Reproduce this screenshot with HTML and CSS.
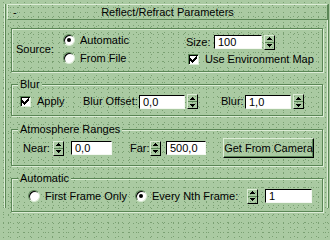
FILE: index.html
```html
<!DOCTYPE html>
<html>
<head>
<meta charset="utf-8">
<link rel="stylesheet" href="styles.css">
</head>
<body>
<div class="rollout">
  <div class="titlebar">
    <span class="minus">-</span>
    <span class="title">Reflect/Refract Parameters</span>
    <span></span>
  </div>

  <div class="group g-source">
    <div class="src-label">Source:</div>
    <div class="radio-col">
      <div class="opt"><span class="radio on"></span>Automatic</div>
      <div class="opt"><span class="radio"></span>From File</div>
    </div>
    <div class="src-right">
      <div class="row">
        <span class="lbl-size">Size:</span>
        <span class="num w48">100</span>
        <span class="spin sp-after"><i class="up"><svg width="5" height="3" viewBox="0 0 5 3"><path d="M2 0h1v1h1v1h1v1H0V2h1V1h1z"/></svg></i><i class="dn"><svg width="5" height="3" viewBox="0 0 5 3"><path d="M0 0h5v1H4v1H3v1H2V2H1V1H0z"/></svg></i></span>
      </div>
      <div class="opt chk-row">
        <span class="check"><svg width="7" height="7" viewBox="0 0 7 7" shape-rendering="crispEdges"><path d="M0 2h1v3H0zM1 3h1v3H1zM2 4h1v3H2zM3 3h1v3H3zM4 2h1v3H4zM5 1h1v3H5zM6 0h1v3H6z"/></svg></span>Use Environment Map
      </div>
    </div>
  </div>

  <div class="group g-blur">
    <div class="legend">Blur</div>
    <div class="row r-blur">
      <span class="check"><svg width="7" height="7" viewBox="0 0 7 7" shape-rendering="crispEdges"><path d="M0 2h1v3H0zM1 3h1v3H1zM2 4h1v3H2zM3 3h1v3H3zM4 2h1v3H4zM5 1h1v3H5zM6 0h1v3H6z"/></svg></span>
      <span class="lbl-apply">Apply</span>
      <span class="lbl-offset">Blur Offset:</span>
      <span class="num w46">0,0</span>
      <span class="spin sp-after"><i class="up"><svg width="5" height="3" viewBox="0 0 5 3"><path d="M2 0h1v1h1v1h1v1H0V2h1V1h1z"/></svg></i><i class="dn"><svg width="5" height="3" viewBox="0 0 5 3"><path d="M0 0h5v1H4v1H3v1H2V2H1V1H0z"/></svg></i></span>
      <span class="lbl-blur">Blur:</span>
      <span class="num w46">1,0</span>
      <span class="spin sp-after"><i class="up"><svg width="5" height="3" viewBox="0 0 5 3"><path d="M2 0h1v1h1v1h1v1H0V2h1V1h1z"/></svg></i><i class="dn"><svg width="5" height="3" viewBox="0 0 5 3"><path d="M0 0h5v1H4v1H3v1H2V2H1V1H0z"/></svg></i></span>
    </div>
  </div>

  <div class="group g-atmo">
    <div class="legend">Atmosphere Ranges</div>
    <div class="row r-atmo">
      <span class="lbl-near">Near:</span>
      <span class="spin sp-before"><i class="up"><svg width="5" height="3" viewBox="0 0 5 3"><path d="M2 0h1v1h1v1h1v1H0V2h1V1h1z"/></svg></i><i class="dn"><svg width="5" height="3" viewBox="0 0 5 3"><path d="M0 0h5v1H4v1H3v1H2V2H1V1H0z"/></svg></i></span>
      <span class="num w41">0,0</span>
      <span class="lbl-far">Far:</span>
      <span class="spin sp-before sp-far"><i class="up"><svg width="5" height="3" viewBox="0 0 5 3"><path d="M2 0h1v1h1v1h1v1H0V2h1V1h1z"/></svg></i><i class="dn"><svg width="5" height="3" viewBox="0 0 5 3"><path d="M0 0h5v1H4v1H3v1H2V2H1V1H0z"/></svg></i></span>
      <span class="num w40">500,0</span>
      <span class="btn">Get From Camera</span>
    </div>
  </div>

  <div class="group g-auto">
    <div class="legend">Automatic</div>
    <div class="row r-auto">
      <span class="radio"></span>
      <span class="lbl-first">First Frame Only</span>
      <span class="radio on"></span>
      <span class="lbl-nth">Every Nth Frame:</span>
      <span class="spin sp-before"><i class="up"><svg width="5" height="3" viewBox="0 0 5 3"><path d="M2 0h1v1h1v1h1v1H0V2h1V1h1z"/></svg></i><i class="dn"><svg width="5" height="3" viewBox="0 0 5 3"><path d="M0 0h5v1H4v1H3v1H2V2H1V1H0z"/></svg></i></span>
      <span class="num w47">1</span>
    </div>
  </div>
</div>
</body>
</html>
```
FILE: styles.css
```css
:root {
  --bg: #aacaa2;
  --dot: #7aa072;
  --dk: #5a8655;
  --lt: #dcecd6;
}

html, body {
  margin: 0;
}

body,
.legend {
  background-color: var(--bg);
  background-image:
    radial-gradient(circle, var(--dot) 0.6px, transparent 0.9px),
    radial-gradient(circle, var(--dot) 0.6px, transparent 0.9px),
    radial-gradient(circle, var(--dot) 0.6px, transparent 0.9px);
  background-size: 7px 5px, 11px 7px, 5px 9px;
  background-position: 0 0, 3px 2px, 1px 3px;
  background-attachment: fixed;
}

body {
  width: 330px;
  height: 214px;
  overflow: hidden;
  font-family: "Liberation Sans", Arial, sans-serif;
  font-size: 11px;
  line-height: 13px;
  color: #000;
}

.rollout {
  margin: 10px 1px 0 4px;
  height: 204px;
  border-left: 1px solid var(--lt);
  border-right: 1px solid var(--dk);
  box-shadow: inset 1px 0 0 var(--dk), inset -1px 0 0 var(--lt);
}

.titlebar {
  margin: -6px 0 0 2px;
  height: 14px;
  border: 1px solid;
  border-color: var(--lt) var(--dk) var(--dk) var(--lt);
  display: grid;
  grid-template-columns: 1fr auto 1fr;
  align-items: center;
}

.minus {
  padding-left: 5px;
}

.group {
  position: relative;
  margin: 0 5px 0 6px;
  border: 1px solid var(--dk);
  box-shadow: inset 1px 1px 0 var(--lt), 1px 1px 0 var(--lt);
}

.legend {
  margin: -7px 0 0 6px;
  padding: 0 2px;
  width: max-content;
  height: 13px;
}

.row {
  display: flex;
  align-items: center;
  white-space: nowrap;
}

.opt {
  display: flex;
  align-items: center;
  height: 16px;
  white-space: nowrap;
}

/* Source */
.g-source {
  margin-top: 8px;
  display: flex;
  padding: 3px 0 4px;
}

.src-label {
  box-sizing: border-box;
  width: 51px;
  padding-left: 4px;
  align-self: center;
}

.radio-col {
  width: 123px;
  display: flex;
  flex-direction: column;
  gap: 2px;
}

.radio-col .radio {
  margin-right: 5px;
}

.src-right {
  display: flex;
  flex-direction: column;
  padding-top: 2px;
  gap: 1px;
}

.src-right .row {
  height: 16px;
}

.lbl-size {
  width: 28px;
}

.chk-row .check {
  margin: 0 6px 0 2px;
}

/* Blur */
.g-blur {
  margin-top: 12px;
  padding-bottom: 6px;
}

.r-blur {
  margin-top: 3px;
  height: 15px;
  padding-left: 8px;
}

.r-blur .check {
  margin-right: 6px;
}

.lbl-apply {
  width: 46px;
}

.lbl-offset {
  width: 56px;
}

.lbl-blur {
  margin-left: 23px;
  width: 24px;
}

/* Atmosphere */
.g-atmo {
  margin-top: 13px;
  padding-bottom: 7px;
}

.r-atmo {
  margin-top: 2px;
  height: 20px;
  padding-left: 11px;
}

.lbl-near {
  width: 30px;
}

.lbl-far {
  margin-left: 18px;
  width: 20px;
}

/* Automatic */
.g-auto {
  margin-top: 12px;
  padding-bottom: 7px;
}

.r-auto {
  margin-top: 3px;
  height: 16px;
  padding-left: 16px;
}

.r-auto .radio {
  margin-right: 5px;
}

.lbl-first {
  width: 90px;
}

.lbl-nth {
  width: 95px;
}

/* Controls */
.num {
  box-sizing: border-box;
  height: 14px;
  background: #fff;
  border: 1px solid;
  border-color: #000 #f4f8f2 #f4f8f2 #000;
  padding-left: 3px;
  line-height: 12px;
}

.w40 { width: 40px; }
.w41 { width: 41px; }
.w46 { width: 46px; }
.w47 { width: 47px; }
.w48 { width: 48px; }

.spin {
  box-sizing: border-box;
  width: 11px;
  height: 15px;
  flex: none;
  border: 1px solid;
  border-color: var(--lt) #000 #000 var(--lt);
  display: flex;
  flex-direction: column;
}

.sp-after {
  margin-left: 2px;
}

.sp-before {
  margin-right: 7px;
}

.sp-far {
  margin-right: 5px;
}

.spin i {
  flex: 1;
  display: flex;
  align-items: center;
  justify-content: center;
}

.spin .up {
  border-bottom: 1px solid var(--dk);
}

.spin svg {
  display: block;
  fill: #000;
}

.btn {
  box-sizing: border-box;
  margin-left: 17px;
  width: 91px;
  height: 20px;
  border: 1px solid;
  border-color: var(--lt) #000 #000 var(--lt);
  box-shadow: inset -1px -1px 0 var(--dk);
  display: flex;
  align-items: center;
  justify-content: center;
}

.check {
  box-sizing: border-box;
  width: 11px;
  height: 11px;
  flex: none;
  background: #fff;
  border: 1px solid;
  border-color: var(--dk) var(--lt) var(--lt) var(--dk);
  box-shadow: inset 1px 1px 0 #000;
  padding: 1px 0 0 1px;
}

.check svg {
  display: block;
  fill: #000;
}

.radio {
  box-sizing: border-box;
  width: 12px;
  height: 12px;
  flex: none;
  border-radius: 50%;
  background: #fff;
  border: 1px solid;
  border-color: var(--dk) var(--lt) var(--lt) var(--dk);
  box-shadow: inset 1px 1px 0 #000;
  display: flex;
  align-items: center;
  justify-content: center;
}

.radio.on::after {
  content: "";
  width: 4px;
  height: 4px;
  border-radius: 50%;
  background: #000;
}
```
